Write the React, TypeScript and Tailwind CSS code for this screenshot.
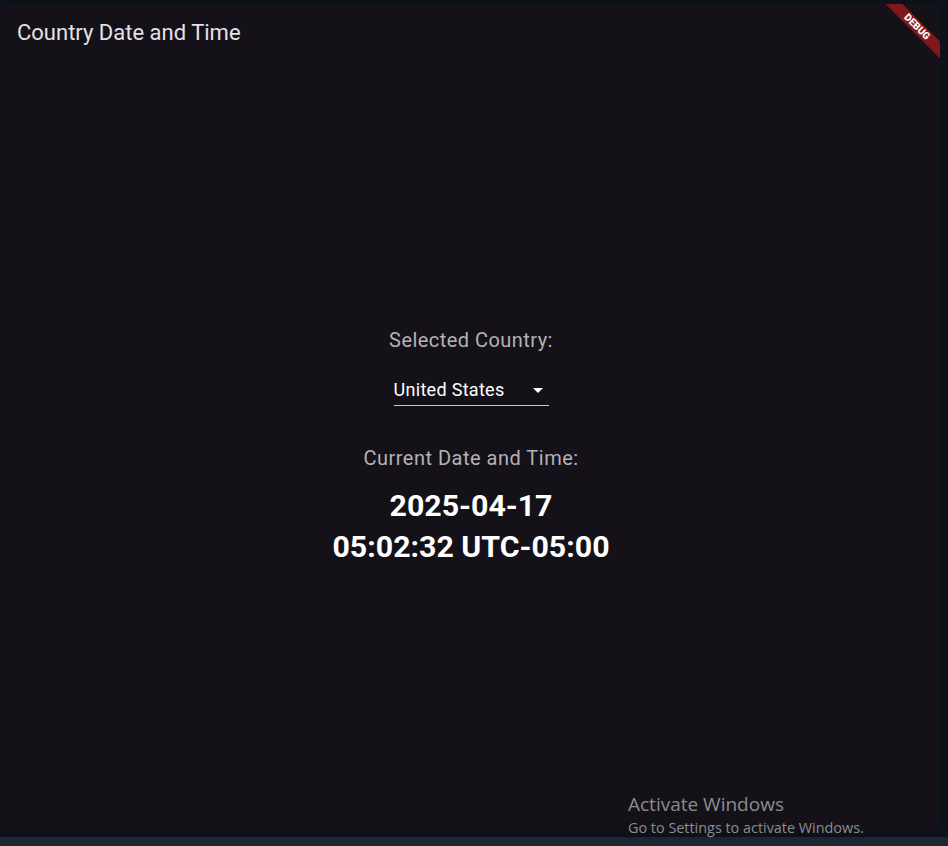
import React from "react";

export default function App() {
  return (
    <div
      className="relative w-[948px] h-[846px] bg-[#0b121a] overflow-hidden"
      style={{ fontFamily: "Roboto, 'Noto Sans', sans-serif" }}
    >
      <div className="absolute left-0 right-0 bottom-0 h-[9px] bg-[#1c2530]" />
      <div className="ml-[2px] mt-[4px] w-[938px] h-[826px] bg-[#141218] relative flex flex-col overflow-hidden">
        {/* App bar */}
        <div className="h-[64px] pl-[15px] pt-[15px] shrink-0">
          <div className="text-[22px] leading-[28px] text-[#e6e0e9]">Country Date and Time</div>
        </div>
        {/* Body */}
        <div className="flex flex-col items-center pt-[260px]">
          <div className="text-[20px] leading-[24px] tracking-[0.45px] text-[#b4b1b9]">Selected Country:</div>
          <div className="w-[155px] pt-[26px] pb-[3px] border-b border-[#c9c5cc] flex items-center justify-between">
            <span className="text-[18px] leading-[24px] tracking-[0.3px] text-white">United States</span>
            <svg width="24" height="24" viewBox="0 0 24 24" className="-mr-[1px]">
              <path d="M7 10l5 5 5-5z" fill="#ffffff" />
            </svg>
          </div>
          <div className="mt-[40px] text-[20px] leading-[24px] tracking-[0.5px] text-[#b4b1b9]">Current Date and Time:</div>
          <div className="mt-[15px] text-[30.3px] leading-[41px] font-bold text-white text-center">
            <div>2025-04-17</div>
            <div>05:02:32 UTC-05:00</div>
          </div>
        </div>
        {/* Debug banner */}
        <div className="absolute top-0 right-0 w-[56px] h-[56px] overflow-hidden pointer-events-none">
          <div
            className="absolute w-[100px] h-[12px] bg-[#b71c1ca8] rotate-45 flex items-center justify-center text-white font-black text-[10px] leading-[12px]"
            style={{ left: -17.25, top: 17.25 }}
          >
            DEBUG
          </div>
        </div>
      </div>
      {/* Windows watermark */}
      <div
        className="absolute left-[628px] top-[791px] text-[#8c8c8e] pointer-events-none"
        style={{ fontFamily: "'Open Sans', 'Noto Sans', sans-serif" }}
      >
        <div className="text-[19px] leading-[27px]">Activate Windows</div>
        <div className="text-[14.4px] leading-[20px]">Go to Settings to activate Windows.</div>
      </div>
    </div>
  );
}
